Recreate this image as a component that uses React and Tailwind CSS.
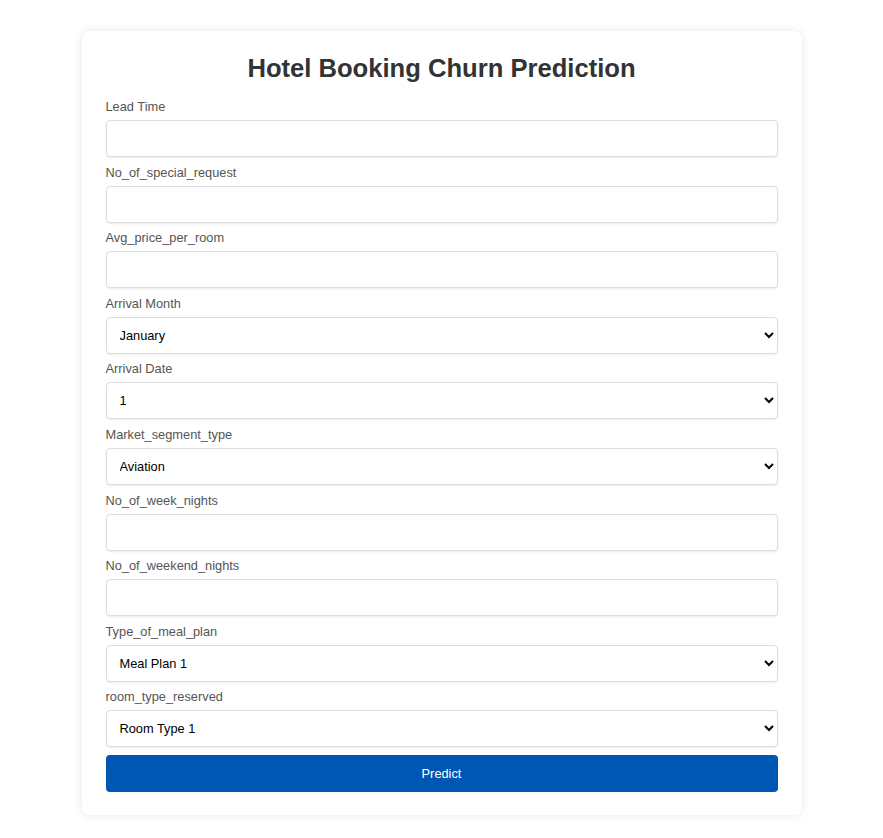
import React from 'react';

const months = ['January', 'February', 'March', 'April', 'May', 'June', 'July', 'August', 'September', 'October', 'November', 'December'];
const days = Array.from({ length: 31 }, (_, i) => i + 1);

const fieldCls =
  'block w-full h-[37px] mb-[7.6px] px-[10px] bg-white border border-[#dddddd] rounded-[4px] shadow-[0_1px_2px_rgba(0,0,0,0.08)] text-[12.8px] text-black outline-none';

const Label = ({ children }) => (
  <label className="block mb-[6px] text-[12.8px] leading-[15px] text-[#555555]">{children}</label>
);

const TextField = ({ label }) => (
  <div>
    <Label>{label}</Label>
    <input type="text" className={fieldCls} />
  </div>
);

const SelectField = ({ label, options }) => (
  <div>
    <Label>{label}</Label>
    <select className={fieldCls + ' pl-[9px]'}>
      {options.map((o) => (
        <option key={o}>{o}</option>
      ))}
    </select>
  </div>
);

export default function App() {
  return (
    <div className="min-h-[838px] bg-white pt-[31px] font-['Liberation_Sans',Arial,sans-serif]">
      <div className="mx-auto w-[720px] bg-white rounded-[8px] shadow-[0_0_10px_rgba(0,0,0,0.1)] px-6 pt-[22px] pb-[23px]">
        <h1 className="text-center text-[25.6px] leading-[30px] font-bold text-[#333333] mb-[16px]">
          Hotel Booking Churn Prediction
        </h1>

        <form onSubmit={(e) => e.preventDefault()}>
          <TextField label="Lead Time" />
          <TextField label="No_of_special_request" />
          <TextField label="Avg_price_per_room" />
          <SelectField label="Arrival Month" options={months} />
          <SelectField label="Arrival Date" options={days} />
          <SelectField label="Market_segment_type" options={['Aviation', 'Complementary', 'Corporate', 'Offline', 'Online']} />
          <TextField label="No_of_week_nights" />
          <TextField label="No_of_weekend_nights" />
          <SelectField label="Type_of_meal_plan" options={['Meal Plan 1', 'Meal Plan 2', 'Meal Plan 3', 'Not Selected']} />
          <SelectField label="room_type_reserved" options={['Room Type 1', 'Room Type 2', 'Room Type 3', 'Room Type 4', 'Room Type 5', 'Room Type 6', 'Room Type 7']} />

          <button
            type="submit"
            className="block w-full h-[37px] bg-[#0056b3] text-white text-[12.8px] rounded-[4px]"
          >
            Predict
          </button>
        </form>
      </div>
    </div>
  );
}
